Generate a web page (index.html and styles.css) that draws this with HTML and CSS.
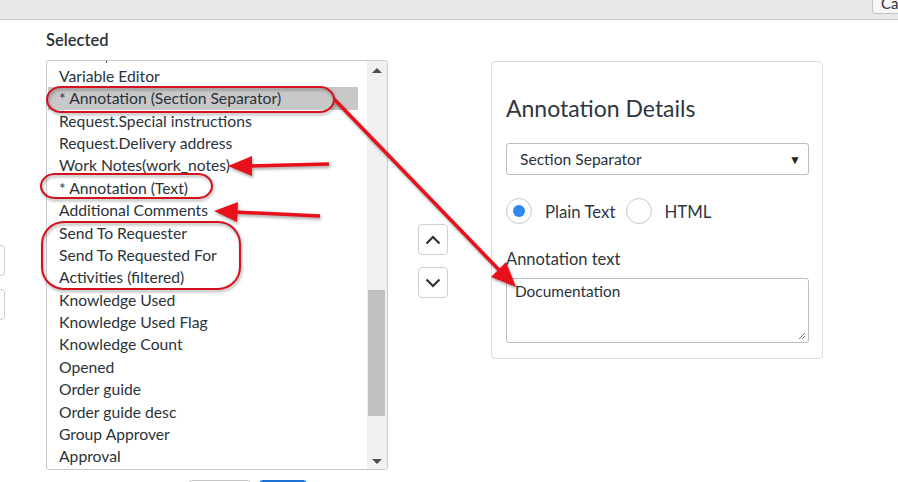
FILE: index.html
```html
<!doctype html>
<html lang="en">
<head>
	<meta charset="UTF-8">
	<title>Annotation details</title>
	<link rel="stylesheet" href="styles.css">
</head>
<body>
	<div class="topbar">
		<button type="button" class="top-btn">Ca</button>
	</div>
	<div class="main">
		<div class="stub">
			<span class="stub-btn"></span>
			<span class="stub-btn"></span>
		</div>
		<div class="selected-col">
			<div class="col-label">Selected</div>
			<div class="listbox">
				<ul class="options">
					<li class="clipped"></li>
					<li>Variable Editor</li>
					<li class="active">* Annotation (Section Separator)</li>
					<li>Request.Special instructions</li>
					<li>Request.Delivery address</li>
					<li>Work Notes(work_notes)</li>
					<li>* Annotation (Text)</li>
					<li>Additional Comments</li>
					<li>Send To Requester</li>
					<li>Send To Requested For</li>
					<li>Activities (filtered)</li>
					<li>Knowledge Used</li>
					<li>Knowledge Used Flag</li>
					<li>Knowledge Count</li>
					<li>Opened</li>
					<li>Order guide</li>
					<li>Order guide desc</li>
					<li>Group Approver</li>
					<li>Approval</li>
				</ul>
				<div class="scrollbar">
					<span class="sb-btn"><span class="tri-up"></span></span>
					<div class="sb-track"><div class="sb-thumb"></div></div>
					<span class="sb-btn"><span class="tri-down"></span></span>
				</div>
			</div>
			<div class="list-actions">
				<button type="button" class="btn-default" aria-label="Cancel"></button>
				<button type="button" class="btn-primary" aria-label="Save"></button>
			</div>
		</div>
		<div class="move-col">
			<button type="button" class="move-btn">
				<svg width="16" height="10" viewBox="0 0 16 10"><polyline points="1.5,8.5 8,2 14.5,8.5" fill="none" stroke="#2b323b" stroke-width="2.2"/></svg>
			</button>
			<button type="button" class="move-btn">
				<svg width="16" height="10" viewBox="0 0 16 10"><polyline points="1.5,1.5 8,8 14.5,1.5" fill="none" stroke="#2b323b" stroke-width="2.2"/></svg>
			</button>
		</div>
		<div class="details-card">
			<h2 class="card-title">Annotation Details</h2>
			<div class="select-box">
				<span>Section Separator</span>
				<span class="select-arrow">&#9660;</span>
			</div>
			<div class="radio-row">
				<span class="radio checked"></span>
				<span class="radio-label">Plain Text</span>
				<span class="radio"></span>
				<span class="radio-label">HTML</span>
			</div>
			<div class="field-label">Annotation text</div>
			<div class="textarea">
				Documentation
				<svg class="grip" width="9" height="9" viewBox="0 0 9 9"><path d="M8 2 L2 8 M8 5 L5 8" stroke="#777" stroke-width="1"/></svg>
			</div>
		</div>
	</div>

	<!-- red markup drawn over the screenshot -->
	<svg class="markup" width="898" height="482" viewBox="0 0 898 482">
		<g fill="none" stroke="#d4121e" stroke-width="2">
			<rect x="47" y="87" width="287" height="25" rx="14" ry="12.5"/>
			<rect x="41" y="174" width="171" height="24" rx="14" ry="12"/>
			<rect x="42" y="222" width="198" height="67" rx="22" ry="22"/>
		</g>
		<g stroke="#e8101a" stroke-width="3.5" fill="#e8101a">
			<line x1="329" y1="164" x2="248" y2="166"/>
			<polygon points="228,166 252,156 252,176" stroke="none"/>
			<line x1="320" y1="216" x2="234" y2="212"/>
			<polygon points="214,211 238,202 237,222" stroke="none"/>
			<line x1="334" y1="99" x2="502" y2="273"/>
			<polygon points="516,287 491,277 506,262" stroke="none"/>
		</g>
	</svg>
</body>
</html>
```
FILE: styles.css
```css
*{
	margin:0;
	padding:0;
	box-sizing:border-box;
}
body{
	width:898px;
	height:482px;
	overflow:hidden;
	background:#fff;
	font-family:Lato, "Liberation Sans", sans-serif;
	color:#2b323a;
	position:relative;
}
button{
	font-family:inherit;
}

.topbar{
	height:20px;
	background-color:#e7e8ea;
	border-bottom:1px solid #c6c7c9;
	display:flex;
	justify-content:flex-end;
	overflow:hidden;
}
.top-btn{
	width:30px;
	height:24px;
	margin-top:-10px;
	margin-right:-4px;
	border:1px solid #c4c4c4;
	border-radius:3px;
	background:#f6f6f6;
	color:#333;
	font-size:15px;
	text-align:left;
	padding-left:8px;
	padding-top:2px;
}

.main{
	display:flex;
	align-items:flex-start;
}

.stub{
	width:5px;
	margin-top:225px;
	display:flex;
	flex-direction:column;
	align-items:flex-end;
	gap:13px;
	overflow:hidden;
}
.stub-btn{
	display:block;
	width:30px;
	height:31px;
	flex-shrink:0;
	border:1px solid #ccc;
	border-radius:4px;
}

.selected-col{
	margin-left:41px;
	margin-top:10px;
}
.col-label{
	font-size:16.5px;
	font-weight:600;
	line-height:20px;
	height:20px;
	margin-bottom:10px;
	color:#2b323a;
}
.listbox{
	width:342px;
	height:410px;
	border:1px solid #c9c9c9;
	border-radius:3px;
	display:flex;
	overflow:hidden;
}
.options{
	list-style:none;
	flex:1;
	overflow:hidden;
}
.options li{
	height:22.4px;
	line-height:22.4px;
	font-size:15.7px;
	padding-left:11px;
	margin-left:1px;
	margin-right:9px;
	white-space:nowrap;
	color:#2b323a;
}
.options li.clipped{
	height:3.8px;
	position:relative;
}
.options li.clipped::after{
	content:"";
	position:absolute;
	left:58px;
	top:0;
	width:1px;
	height:2px;
	background:#555;
}
.options li.active{
	background-color:#c8c8c8;
}

.scrollbar{
	width:20px;
	background:#f1f1f1;
	display:flex;
	flex-direction:column;
}
.sb-btn{
	height:20px;
	display:flex;
	align-items:center;
	justify-content:center;
}
.tri-up,
.tri-down{
	width:0;
	height:0;
	border-left:5px solid transparent;
	border-right:5px solid transparent;
}
.tri-up{
	border-bottom:5px solid #505050;
	margin-bottom:1px;
}
.tri-down{
	border-top:5px solid #505050;
	margin-top:4px;
}
.sb-track{
	flex:1;
}
.sb-thumb{
	margin-top:209px;
	margin-left:1px;
	width:17px;
	height:126px;
	background:#c1c1c1;
}

.list-actions{
	margin-top:10px;
	padding-left:142px;
	display:flex;
	gap:8px;
}
.btn-default,
.btn-primary{
	height:30px;
	border-radius:4px;
}
.btn-default{
	width:63px;
	border:1px solid #c8c8c8;
	background:#fff;
}
.btn-primary{
	width:48px;
	border:1px solid #1b6fd1;
	background:#1f74d8;
}

.move-col{
	margin-left:30px;
	margin-top:204px;
	display:flex;
	flex-direction:column;
	gap:12px;
}
.move-btn{
	width:30px;
	height:31px;
	border:1px solid #cfcfcf;
	border-radius:4px;
	background:#fff;
	display:flex;
	align-items:center;
	justify-content:center;
}

.details-card{
	margin-left:43px;
	margin-top:41px;
	width:332px;
	height:298px;
	border:1px solid #dcdcdc;
	border-radius:4px;
	padding:31px 13px 0 14px;
}
.card-title{
	font-size:23px;
	font-weight:normal;
	line-height:30px;
	color:#2f363e;
	margin-bottom:20px;
}
.select-box{
	height:32px;
	border:1px solid #bdbdbd;
	border-radius:3px;
	display:flex;
	align-items:center;
	justify-content:space-between;
	padding:0 7px 0 13px;
	font-size:15.6px;
	color:#2b323a;
}
.select-arrow{
	font-size:12px;
	color:#222;
}
.radio-row{
	margin-top:23px;
	height:26px;
	display:flex;
	align-items:center;
}
.radio{
	width:26px;
	height:26px;
	border:1px solid #c8c8c8;
	border-radius:50%;
	display:flex;
	align-items:center;
	justify-content:center;
}
.radio.checked::after{
	content:"";
	width:12px;
	height:12px;
	border-radius:50%;
	background:#2e88ee;
}
.radio-label{
	font-size:16.8px;
	margin-left:13px;
	margin-right:10px;
	color:#2f363e;
}
.field-label{
	margin-top:25px;
	font-size:16.5px;
	line-height:20px;
	height:20px;
	color:#2f363e;
}
.textarea{
	margin-top:9px;
	height:65px;
	border:1px solid #bdbdbd;
	border-radius:3px;
	padding:2px 8px;
	font-size:15.4px;
	line-height:20px;
	color:#2b323a;
	position:relative;
}
.grip{
	position:absolute;
	right:2px;
	bottom:2px;
}

.markup{
	position:absolute;
	left:0;
	top:0;
	pointer-events:none;
	filter:drop-shadow(1px 2px 1.5px rgba(0,0,0,0.35));
}
```
